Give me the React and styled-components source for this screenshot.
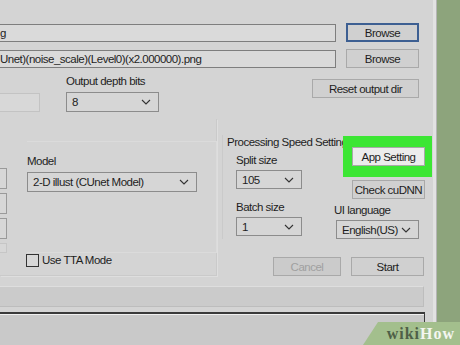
import styled, { createGlobalStyle } from "styled-components";

const GlobalStyle = createGlobalStyle`
  html, body {
    margin: 0;
    padding: 0;
    background: #8da47c;
  }
  body {
    font-family: "Liberation Sans", Arial, sans-serif;
    font-size: 11.5px;
    letter-spacing: -0.5px;
    color: #1e1e1e;
  }
`;

function Chevron() {
  return (
    <svg width="10" height="6" viewBox="0 0 10 6">
      <polyline points="1,1 5,5 9,1" fill="none" stroke="#333" strokeWidth="1.1" />
    </svg>
  );
}

function Dropdown({ value, width }) {
  return (
    <Select $width={width}>
      <span>{value}</span>
      <Chevron />
    </Select>
  );
}

export default function App() {
  return (
    <Screen>
      <GlobalStyle />
      <Window>
        <PathRow $top={23}>
          <PathInput>g</PathInput>
          <Button $focused>Browse</Button>
        </PathRow>
        <PathRow $top={6}>
          <PathInput>Unet)(noise_scale)(Level0)(x2.000000).png</PathInput>
          <Button>Browse</Button>
        </PathRow>

        <OutputRow>
          <DisabledBox />
          <Field>
            <Label>Output depth bits</Label>
            <Dropdown value="8" width={93} />
          </Field>
          <Button $width={107} $top={5}>Reset output dir</Button>
        </OutputRow>

        <SettingsRow>
          <LeftGroup>
            <LeftTop>
              <Stack>
                <StackBox />
                <StackBox />
                <StackBox />
                <StackBox $short />
              </Stack>
              <ModelCol>
                <Label>Model</Label>
                <Dropdown value="2-D illust (CUnet Model)" width={170} />
              </ModelCol>
            </LeftTop>
            <CheckRow>
              <CheckBox />
              <span>Use TTA Mode</span>
            </CheckRow>
          </LeftGroup>

          <RightArea>
            <SpeedRow>
              <SpeedGroup>
                <Legend>Processing Speed Settings</Legend>
                <SubField>
                  <Label>Split size</Label>
                  <Dropdown value="105" width={66} />
                </SubField>
                <SubField $top={11}>
                  <Label>Batch size</Label>
                  <Dropdown value="1" width={66} />
                </SubField>
              </SpeedGroup>
              <RightCol>
                <Highlight>
                  <Button $light>App Setting</Button>
                </Highlight>
                <Button $left={18} $top={3}>Check cuDNN</Button>
                <LangField>
                  <Label>UI language</Label>
                  <Dropdown value="English(US)" width={83} />
                </LangField>
              </RightCol>
            </SpeedRow>
            <ActionRow>
              <Button $width={68} $disabled>Cancel</Button>
              <Button>Start</Button>
            </ActionRow>
          </RightArea>
        </SettingsRow>

        <Progress />
        <Log />
      </Window>

      <Watermark>
        <Wiki>wiki</Wiki>
        <How>How</How>
      </Watermark>
    </Screen>
  );
}

const Screen = styled.div`
  position: relative;
  width: 460px;
  height: 345px;
  overflow: hidden;
  display: flex;
  background: #8da47c;
`;

const Window = styled.div`
  width: 433px;
  height: 345px;
  display: flex;
  flex-direction: column;
  background: #d4d4d4;
  border-right: 3px solid #e2e2e2;
  box-shadow: 1px 0 0 #b5b5b5;
`;

const PathRow = styled.div`
  display: flex;
  align-items: center;
  gap: 10px;
  margin-top: ${(p) => p.$top}px;
  padding-right: 14px;
  height: 20px;
`;

const PathInput = styled.div`
  flex: 1;
  height: 16px;
  line-height: 16px;
  background: #dadada;
  border: 1px solid #7e7e7e;
  border-left: none;
  white-space: nowrap;
  overflow: hidden;
`;

const Button = styled.div`
  box-sizing: border-box;
  width: ${(p) => p.$width || 73}px;
  height: 19px;
  flex-shrink: 0;
  margin-top: ${(p) => p.$top || 0}px;
  margin-left: ${(p) => p.$left || 0}px;
  align-self: flex-start;
  display: flex;
  align-items: center;
  justify-content: center;
  background: ${(p) => (p.$light ? "#ececec" : p.$disabled ? "#cbcbcb" : "#d0d0d0")};
  border: ${(p) => (p.$focused ? "2px solid #3d5f92" : "1px solid #a9a9a9")};
  color: ${(p) => (p.$disabled ? "#a0a0a0" : "#1e1e1e")};
  white-space: nowrap;
`;

const OutputRow = styled.div`
  display: flex;
  margin-top: 5px;
  padding-right: 14px;
`;

const DisabledBox = styled.div`
  width: 40px;
  height: 19px;
  margin-top: 19px;
  box-sizing: border-box;
  background: #d8d8d8;
  border: 1px solid #c3c3c3;
  border-left: none;
`;

const Field = styled.div`
  display: flex;
  flex-direction: column;
  margin-left: 26px;
  flex: 1;
`;

const Label = styled.div`
  line-height: 14px;
  height: 14px;
  white-space: nowrap;
`;

const Select = styled.div`
  box-sizing: border-box;
  width: ${(p) => p.$width}px;
  height: 20px;
  margin-top: 4px;
  display: flex;
  align-items: center;
  justify-content: space-between;
  padding: 0 7px 0 5px;
  background: #d6d6d6;
  border: 1px solid #8c8c8c;
  white-space: nowrap;
`;

const SettingsRow = styled.div`
  display: flex;
  margin-top: 7px;
  height: 162px;
`;

const LeftGroup = styled.div`
  width: 216px;
  height: 156px;
  display: flex;
  flex-direction: column;
  border-right: 1px solid #cacaca;
  border-bottom: 1px solid #cacaca;
  box-shadow: 1px 1px 0 #dedede;
`;

const LeftTop = styled.div`
  display: flex;
  padding-top: 22px;
`;

const Stack = styled.div`
  display: flex;
  flex-direction: column;
  gap: 4px;
  padding-top: 27px;
`;

const StackBox = styled.div`
  width: 7px;
  height: ${(p) => (p.$short ? 10 : 21)}px;
  box-sizing: border-box;
  border: 1px solid ${(p) => (p.$short ? "#c6c6c6" : "#9a9a9a")};
  border-left: none;
  background: #d7d7d7;
`;

const ModelCol = styled.div`
  display: flex;
  flex-direction: column;
  margin-left: 20px;
  padding: 12px 12px 10px 0;
  border-top: 1px solid #dbdbdb;
  border-bottom: 1px solid #dbdbdb;
  box-shadow: 1px 0 0 #dbdbdb;
  width: 180px;
`;

const CheckRow = styled.div`
  margin-top: auto;
  margin-bottom: 10px;
  margin-left: 26px;
  display: flex;
  align-items: center;
  gap: 3px;
  line-height: 14px;
`;

const CheckBox = styled.div`
  width: 11px;
  height: 11px;
  border: 1px solid #333;
  background: #d8d8d8;
`;

const RightArea = styled.div`
  flex: 1;
  display: flex;
  flex-direction: column;
  padding-top: 16px;
  padding-bottom: 5px;
`;

const SpeedRow = styled.div`
  display: flex;
`;

const SpeedGroup = styled.div`
  width: 111px;
  margin-left: 5px;
  display: flex;
  flex-direction: column;
  border-left: 1px solid #cacaca;
`;

const Legend = styled.div`
  line-height: 14px;
  padding-left: 4px;
  white-space: nowrap;
`;

const SubField = styled.div`
  display: flex;
  flex-direction: column;
  margin-top: ${(p) => p.$top || 4}px;
  padding-left: 13px;

  ${Select} {
    margin-top: 3px;
    height: 19px;
  }
`;

const RightCol = styled.div`
  display: flex;
  flex-direction: column;
`;

const Highlight = styled.div`
  margin-top: 1px;
  margin-left: 9px;
  width: 89px;
  box-sizing: border-box;
  padding: 11px 7px 11px 9px;
  background: #3ce634;
`;

const LangField = styled.div`
  display: flex;
  flex-direction: column;
  margin-top: 4px;

  ${Select} {
    margin-top: 3px;
    margin-left: 2px;
    height: 19px;
  }
`;

const ActionRow = styled.div`
  margin-top: auto;
  display: flex;
  justify-content: flex-end;
  gap: 10px;
  padding-right: 9px;
`;

const Progress = styled.div`
  margin-top: 5px;
  margin-right: 9px;
  height: 21px;
  box-sizing: border-box;
  background: #cbcbcb;
  border: 1px solid #bdbdbd;
  border-left: none;
  border-top-color: #dedede;
`;

const Log = styled.div`
  flex: 1;
  margin-top: 5px;
  margin-right: 8px;
  background: #c9c9c9;
  border-top: 2px solid #3a3a3a;
  border-right: 1px solid #3a3a3a;
  box-shadow: inset 0 1px 0 #f0f0f0;
`;

const Watermark = styled.div`
  position: absolute;
  right: 0;
  bottom: 0;
  width: 97px;
  height: 23px;
  background: #a3bf8d;
  clip-path: polygon(15px 0, 100% 0, 100% 100%, 0 100%);
  display: flex;
  align-items: center;
  justify-content: flex-end;
  padding-right: 5px;
  box-sizing: border-box;
  font-family: "Liberation Serif", "DejaVu Serif", serif;
  font-weight: bold;
  font-size: 16px;
  letter-spacing: 1px;
`;

const Wiki = styled.span`
  color: #4f5f47;
`;

const How = styled.span`
  color: #f4f6f0;
`;
